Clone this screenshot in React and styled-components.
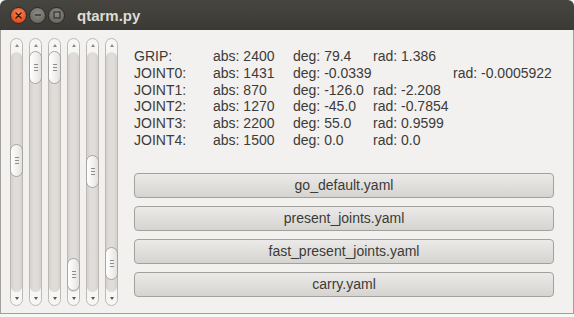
import React from 'react';
import styled, { createGlobalStyle, css } from 'styled-components';

const GlobalStyle = createGlobalStyle`
  html, body {
    margin: 0;
    padding: 0;
    background: #f7f7f6;
  }
  body {
    font-family: 'Liberation Sans', Arial, sans-serif;
  }
`;

const Window = styled.div`
  width: 574px;
  height: 314px;
  display: flex;
  flex-direction: column;
`;

const TitleBar = styled.div`
  height: 30px;
  flex: 0 0 30px;
  display: flex;
  align-items: center;
  padding-left: 10px;
  background: linear-gradient(#46453f, #3b3a36);
  border-radius: 6px 6px 0 0;
  box-sizing: border-box;
`;

const WinButtons = styled.div`
  display: flex;
  gap: 2px;
`;

const WinButton = styled.div`
  width: 17px;
  height: 17px;
  border-radius: 50%;
  box-sizing: border-box;
  border: 1px solid #2c2b28;
  display: flex;
  align-items: center;
  justify-content: center;
  ${(p) =>
    p.$close
      ? css`
          background: radial-gradient(circle at 50% 35%, #f8875a, #e0501c 70%, #c9431a);
        `
      : css`
          background: radial-gradient(circle at 50% 35%, #8c8b86, #6c6b66 70%, #5d5c58);
        `}
`;

const Title = styled.div`
  margin-left: 12px;
  font-size: 15px;
  font-weight: bold;
  color: #dfdbd2;
`;

const Body = styled.div`
  flex: 1;
  display: flex;
  gap: 16px;
  padding: 8px 19px 6px 9px;
  background: #f2f1f0;
  border: 1px solid #a3a09c;
  border-top: none;
`;

const SliderGroup = styled.div`
  display: flex;
  gap: 6px;
`;

const Slider = styled.div`
  width: 13px;
  height: 268px;
  box-sizing: border-box;
  border: 1px solid #bcb9b5;
  border-radius: 7px;
  display: flex;
  flex-direction: column;
  background: #f6f6f5;
`;

const StepButton = styled.div`
  flex: 0 0 13px;
  display: flex;
  justify-content: center;
  align-items: center;
  &::after {
    content: '';
    width: 0;
    height: 0;
    border-left: 2.5px solid transparent;
    border-right: 2.5px solid transparent;
    ${(p) =>
      p.$down
        ? css`
            border-top: 3px solid #595959;
          `
        : css`
            border-bottom: 3px solid #8a8a8a;
          `}
  }
`;

const Track = styled.div`
  flex: 1;
  position: relative;
  background: linear-gradient(to right, #d4d1cd, #dfdcd9 30%, #dfdcd9 70%, #d4d1cd);
  border-radius: 6px;
`;

const Thumb = styled.div`
  position: absolute;
  left: -1px;
  right: -1px;
  height: 33px;
  box-sizing: border-box;
  border: 1px solid #a8a5a1;
  border-radius: 7px;
  background: linear-gradient(to right, #ffffff, #f0efee 60%, #e2e1df);
  display: flex;
  flex-direction: column;
  align-items: center;
  justify-content: center;
  gap: 2px;
`;

const Grip = styled.span`
  width: 4px;
  height: 1px;
  background: #8d8c89;
`;

const Panel = styled.div`
  width: 420px;
  display: flex;
  flex-direction: column;
  padding-top: 10px;
`;

const InfoGrid = styled.div`
  display: grid;
  grid-template-columns: 79px 80px 80px 80px 1fr;
  grid-auto-rows: 16.8px;
  font-size: 14px;
  line-height: 16.8px;
  color: #3c3b37;
  white-space: nowrap;
`;

const Cell = styled.div`
  grid-column: ${(p) => p.$col};
`;

const ButtonList = styled.div`
  margin-top: 24px;
  display: flex;
  flex-direction: column;
  gap: 8px;
`;

const ActionButton = styled.button`
  height: 25px;
  margin: 0;
  padding: 0;
  border: 1px solid #a3a19d;
  border-radius: 4px;
  background: linear-gradient(#ebeae8, #d6d4d1);
  font-family: 'Liberation Sans', Arial, sans-serif;
  font-size: 14px;
  color: #3c3b37;
  text-align: center;
`;

const sliders = [93, 0, 0, 207, 104, 196];

const joints = [
  { name: 'GRIP:', abs: 2400, deg: '79.4', rad: '1.386' },
  { name: 'JOINT0:', abs: 1431, deg: '-0.0339', rad: '-0.0005922', wide: true },
  { name: 'JOINT1:', abs: 870, deg: '-126.0', rad: '-2.208' },
  { name: 'JOINT2:', abs: 1270, deg: '-45.0', rad: '-0.7854' },
  { name: 'JOINT3:', abs: 2200, deg: '55.0', rad: '0.9599' },
  { name: 'JOINT4:', abs: 1500, deg: '0.0', rad: '0.0' },
];

const files = ['go_default.yaml', 'present_joints.yaml', 'fast_present_joints.yaml', 'carry.yaml'];

const CloseIcon = () => (
  <svg width="7" height="7" viewBox="0 0 7 7">
    <path d="M1 1L6 6M6 1L1 6" stroke="#3a1507" strokeWidth="1.4" strokeLinecap="round" />
  </svg>
);

const MinIcon = () => (
  <svg width="8" height="8" viewBox="0 0 8 8">
    <path d="M1 4H7" stroke="#34332f" strokeWidth="1.4" />
  </svg>
);

const MaxIcon = () => (
  <svg width="8" height="8" viewBox="0 0 8 8">
    <rect x="1" y="1" width="6" height="6" fill="none" stroke="#34332f" strokeWidth="1.2" />
  </svg>
);

const App = () => {
  return (
    <>
      <GlobalStyle />
      <Window>
        <TitleBar>
          <WinButtons>
            <WinButton $close>
              <CloseIcon />
            </WinButton>
            <WinButton>
              <MinIcon />
            </WinButton>
            <WinButton>
              <MaxIcon />
            </WinButton>
          </WinButtons>
          <Title>qtarm.py</Title>
        </TitleBar>
        <Body>
          <SliderGroup>
            {sliders.map((pos, i) => (
              <Slider key={i}>
                <StepButton />
                <Track>
                  <Thumb style={{ top: pos - 1 }}>
                    <Grip />
                    <Grip />
                    <Grip />
                  </Thumb>
                </Track>
                <StepButton $down />
              </Slider>
            ))}
          </SliderGroup>
          <Panel>
            <InfoGrid>
              {joints.map((j) => (
                <React.Fragment key={j.name}>
                  <Cell $col={1}>{j.name}</Cell>
                  <Cell $col={2}>abs: {j.abs}</Cell>
                  <Cell $col={3}>deg: {j.deg}</Cell>
                  <Cell $col={j.wide ? 5 : 4}>rad: {j.rad}</Cell>
                </React.Fragment>
              ))}
            </InfoGrid>
            <ButtonList>
              {files.map((f) => (
                <ActionButton key={f}>{f}</ActionButton>
              ))}
            </ButtonList>
          </Panel>
        </Body>
      </Window>
    </>
  );
};

export default App;
